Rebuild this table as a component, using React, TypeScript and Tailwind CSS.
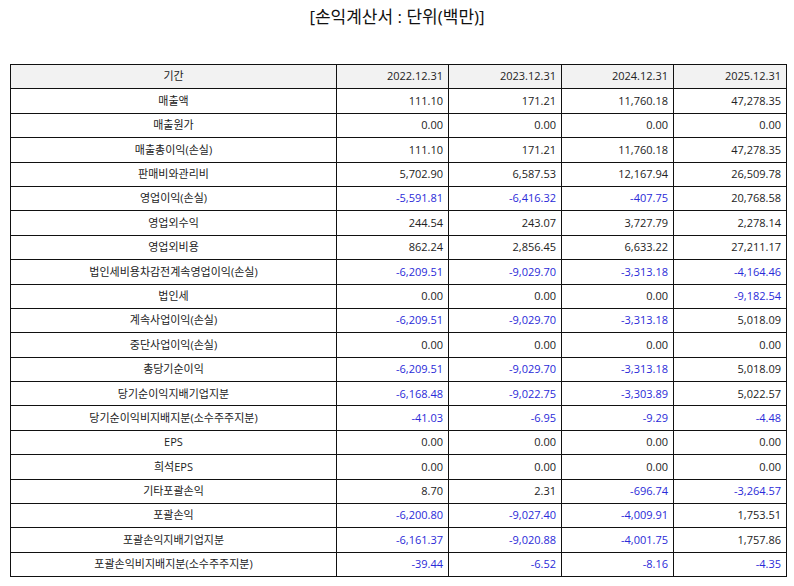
const years = ['2022.12.31', '2023.12.31', '2024.12.31', '2025.12.31'];

const rows: [string, string[]][] = [
  ['매출액', ['111.10', '171.21', '11,760.18', '47,278.35']],
  ['매출원가', ['0.00', '0.00', '0.00', '0.00']],
  ['매출총이익(손실)', ['111.10', '171.21', '11,760.18', '47,278.35']],
  ['판매비와관리비', ['5,702.90', '6,587.53', '12,167.94', '26,509.78']],
  ['영업이익(손실)', ['-5,591.81', '-6,416.32', '-407.75', '20,768.58']],
  ['영업외수익', ['244.54', '243.07', '3,727.79', '2,278.14']],
  ['영업외비용', ['862.24', '2,856.45', '6,633.22', '27,211.17']],
  ['법인세비용차감전계속영업이익(손실)', ['-6,209.51', '-9,029.70', '-3,313.18', '-4,164.46']],
  ['법인세', ['0.00', '0.00', '0.00', '-9,182.54']],
  ['계속사업이익(손실)', ['-6,209.51', '-9,029.70', '-3,313.18', '5,018.09']],
  ['중단사업이익(손실)', ['0.00', '0.00', '0.00', '0.00']],
  ['총당기순이익', ['-6,209.51', '-9,029.70', '-3,313.18', '5,018.09']],
  ['당기순이익지배기업지분', ['-6,168.48', '-9,022.75', '-3,303.89', '5,022.57']],
  ['당기순이익비지배지분(소수주주지분)', ['-41.03', '-6.95', '-9.29', '-4.48']],
  ['EPS', ['0.00', '0.00', '0.00', '0.00']],
  ['희석EPS', ['0.00', '0.00', '0.00', '0.00']],
  ['기타포괄손익', ['8.70', '2.31', '-696.74', '-3,264.57']],
  ['포괄손익', ['-6,200.80', '-9,027.40', '-4,009.91', '1,753.51']],
  ['포괄손익지배기업지분', ['-6,161.37', '-9,020.88', '-4,001.75', '1,757.86']],
  ['포괄손익비지배지분(소수주주지분)', ['-39.44', '-6.52', '-8.16', '-4.35']],
];

export default function App() {
  return (
    <div className="w-[794px] h-[586px] bg-white text-[#222] font-['Open_Sans','Noto_Sans_CJK_KR',sans-serif]">
      <div className="h-[64px] pt-[5px] text-center text-[17px] leading-[24px] text-[#111]">
        [손익계산서 : 단위(백만)]
      </div>
      <table className="ml-[10px] w-[776px] border-collapse table-fixed text-[11px]">
        <colgroup>
          <col className="w-[326px]" />
          <col className="w-[112px]" />
          <col className="w-[113px]" />
          <col className="w-[112px]" />
          <col className="w-[113px]" />
        </colgroup>
        <thead>
          <tr className="h-[24.4px] bg-[#f2f2f2]">
            <th className="border border-[#111] font-normal text-center p-0">기간</th>
            {years.map(y => (
              <th key={y} className="border border-[#111] font-normal text-right pr-[5px] p-0">{y}</th>
            ))}
          </tr>
        </thead>
        <tbody>
          {rows.map(([label, vals]) => (
            <tr key={label} className="h-[24.4px]">
              <td className="border border-[#111] text-center p-0">{label}</td>
              {vals.map((v, i) => (
                <td
                  key={i}
                  className={`border border-[#111] text-right pr-[5px] p-0 ${v.startsWith('-') ? 'text-[#2a2ad8]' : ''}`}
                >
                  {v}
                </td>
              ))}
            </tr>
          ))}
        </tbody>
      </table>
    </div>
  );
}
